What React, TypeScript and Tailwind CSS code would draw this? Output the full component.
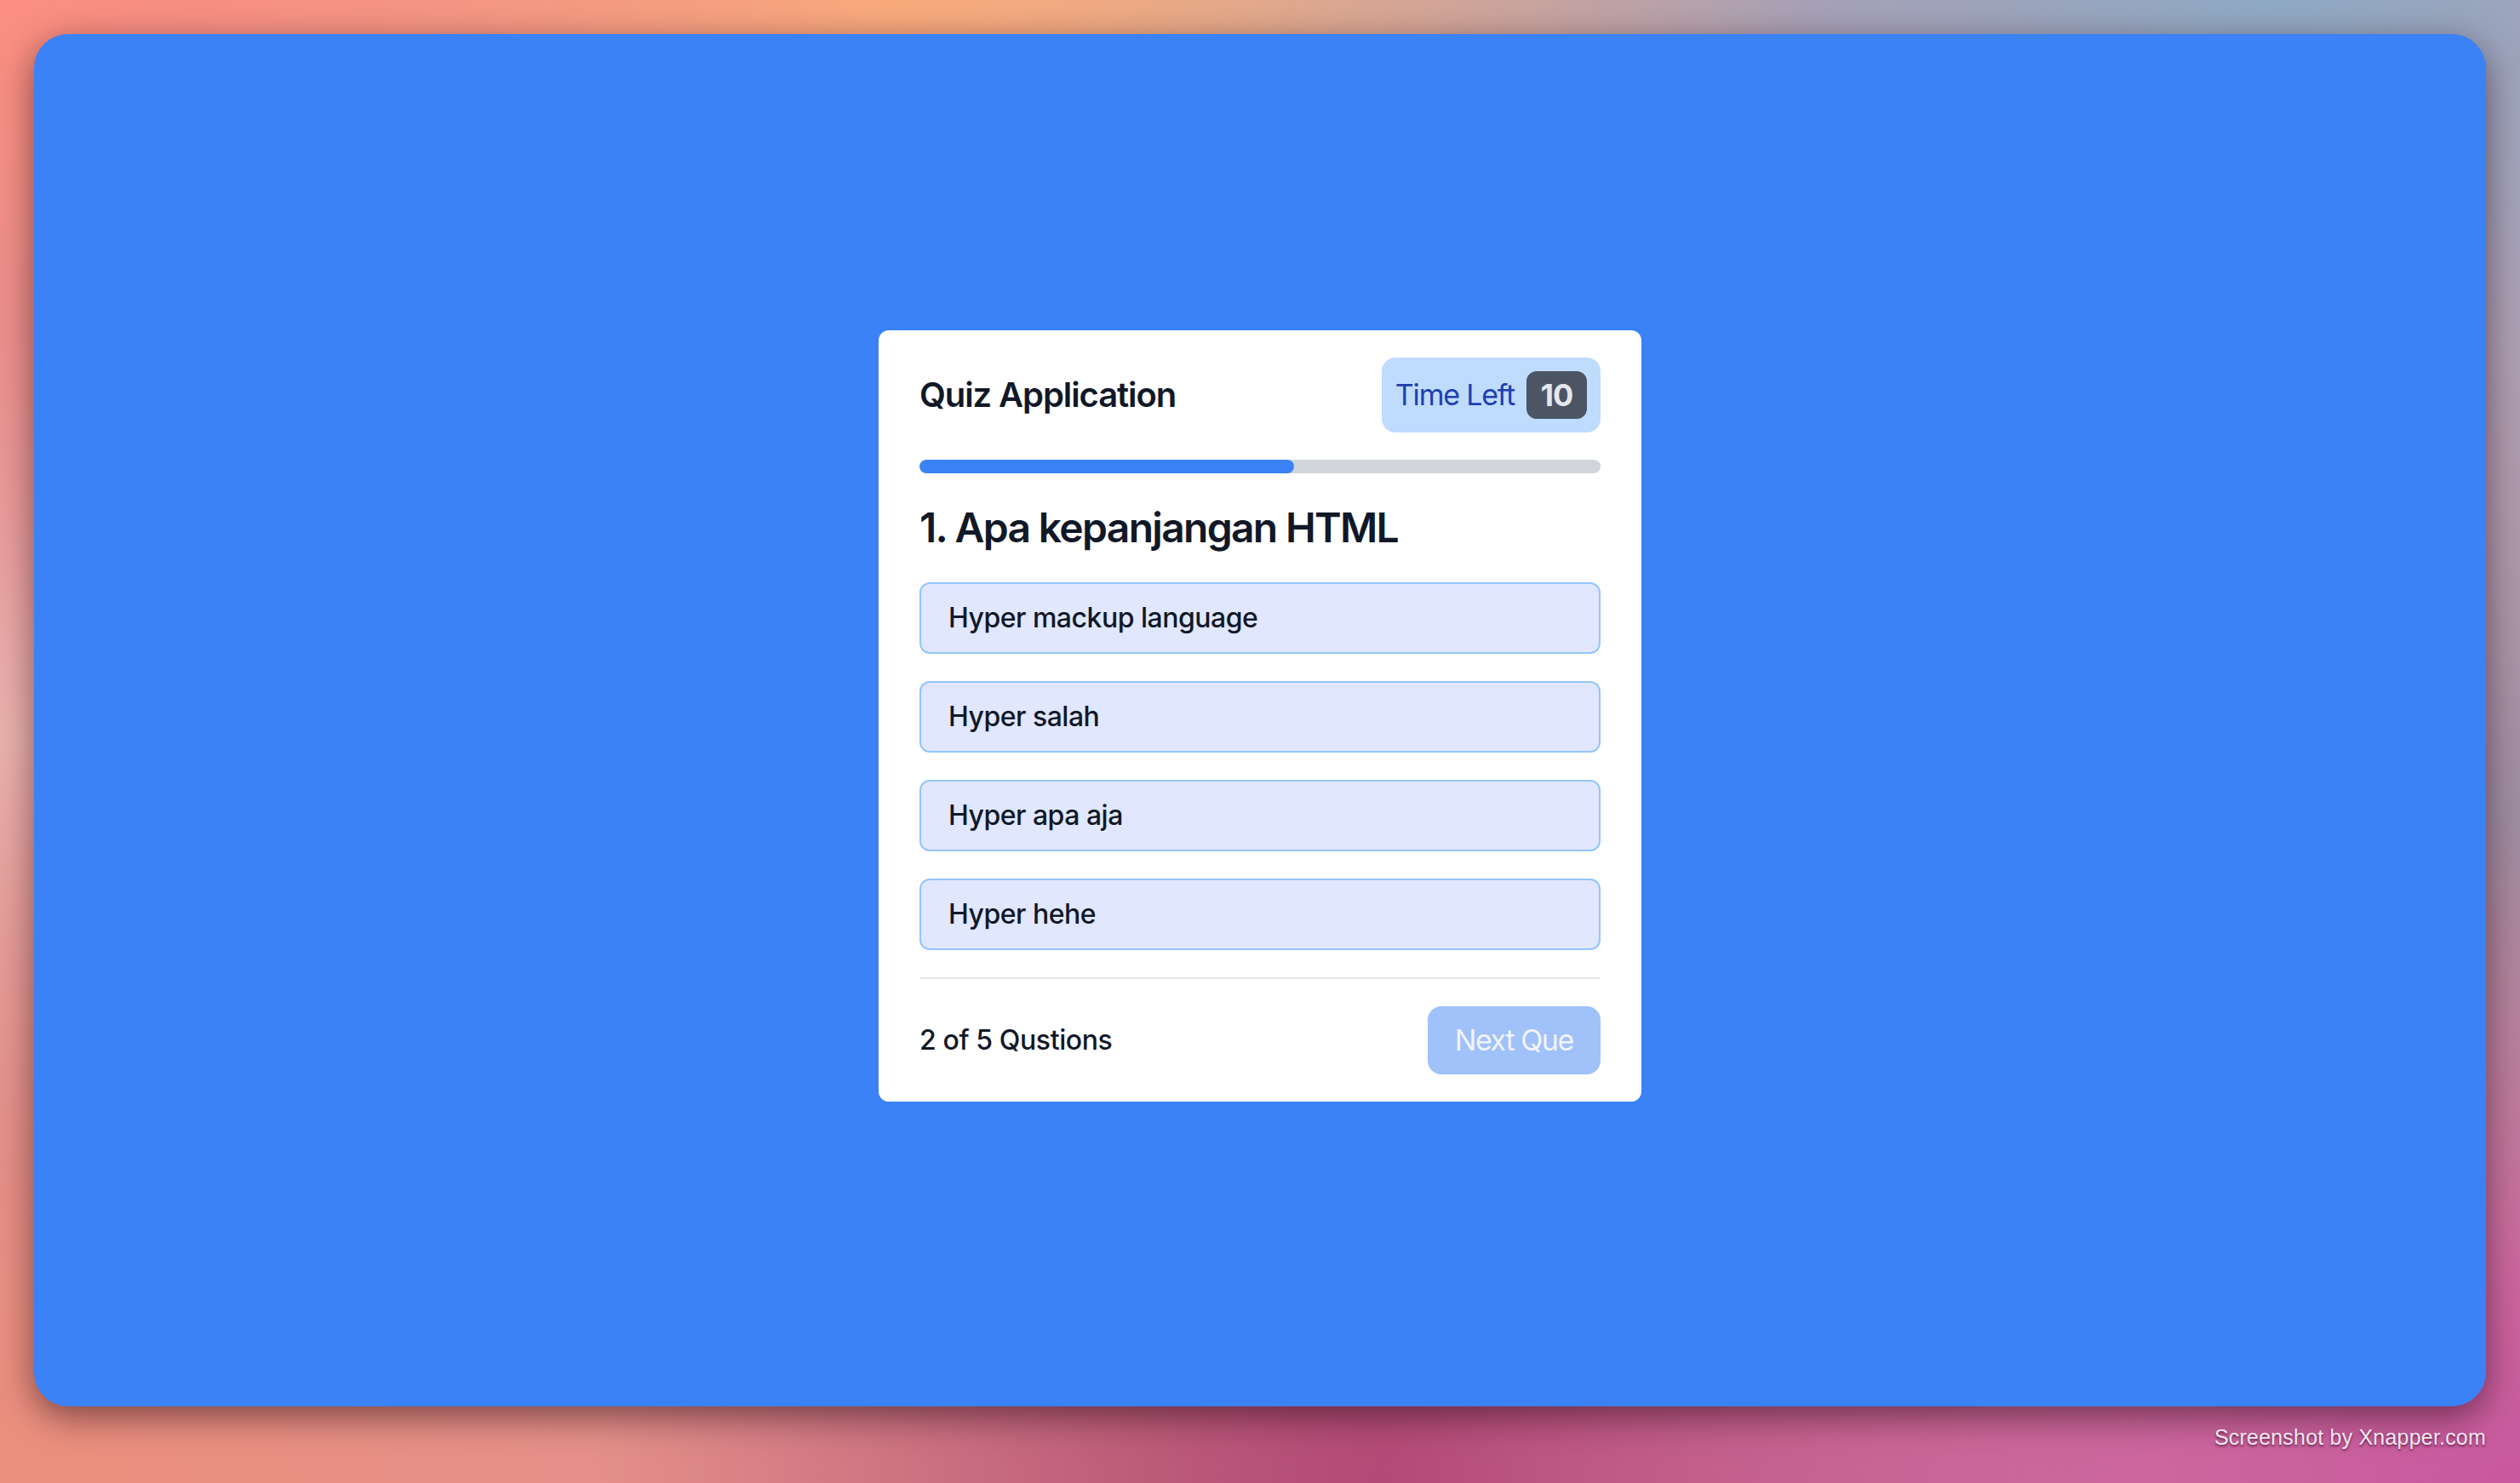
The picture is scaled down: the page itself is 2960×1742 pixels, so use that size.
import React from "react";

const options = ["Hyper mackup language", "Hyper salah", "Hyper apa aja", "Hyper hehe"];

export default function App() {
  return (
    <div
      className="w-[2960px] h-[1742px] flex flex-col px-[40px] pt-[40px] overflow-hidden bg-[#d9909a] bg-[radial-gradient(ellipse_at_0%_0%,#fb8e80_0%,transparent_35%),radial-gradient(ellipse_at_35%_0%,#f7b57a_0%,transparent_40%),radial-gradient(ellipse_at_90%_0%,#8fa9c4_0%,transparent_45%),radial-gradient(ellipse_at_100%_55%,#a08a9e_0%,transparent_40%),radial-gradient(ellipse_at_100%_100%,#c8589f_0%,transparent_40%),radial-gradient(ellipse_at_55%_100%,#ae456c_0%,transparent_40%),radial-gradient(ellipse_at_0%_100%,#ec8f7c_0%,transparent_40%),radial-gradient(ellipse_at_0%_50%,#eab6b3_0%,transparent_40%)]"
      style={{ fontFamily: "Inter, 'Noto Sans', sans-serif" }}
    >
      <div className="h-[1612px] w-full shrink-0 rounded-[40px] bg-[#3b82f6] shadow-[0_12px_40px_rgba(40,10,20,0.55)] flex items-center justify-center pb-[10px]">
        <div className="w-[896px] bg-white rounded-[12px] px-[48px] py-[32px] flex flex-col">
          <div className="flex items-center justify-between">
            <h1 className="text-[40px] leading-[56px] font-semibold text-[#111827] tracking-[-1.1px]">Quiz Application</h1>
            <div className="flex items-center gap-[14px] bg-[#bfdbfe] rounded-[16px] p-[16px]">
              <span className="text-[34px] leading-[56px] text-[#1e40af] tracking-[-1.2px]">Time Left</span>
              <span className="h-[56px] w-[71px] flex items-center justify-center rounded-[12px] bg-[#4b5563] text-[#e5e7eb] text-[36px] leading-[56px] font-bold tracking-[-1px]">10</span>
            </div>
          </div>
          <div className="mt-[32px] h-[16px] w-full rounded-full bg-[#d1d5db] overflow-hidden">
            <div className="h-full rounded-full bg-[#3b82f6]" style={{ width: "55%" }} />
          </div>
          <h2 className="mt-[32px] text-[48px] leading-[64px] font-semibold text-[#111827] tracking-[-1.7px]">1. Apa kepanjangan HTML</h2>
          <div className="mt-[32px] flex flex-col gap-[32px]">
            {options.map((o) => (
              <div
                key={o}
                className="border-2 border-[#93c5fd] bg-[#e0e7ff] rounded-[12px] px-[32px] py-[16px] text-[32px] leading-[48px] font-medium text-[#111827] tracking-[-0.5px]"
              >
                {o}
              </div>
            ))}
          </div>
          <div className="mt-[32px] h-[2px] bg-[#e5e7eb]" />
          <div className="pt-[32px] flex items-center justify-between">
            <span className="text-[32px] leading-[48px] font-medium text-[#111827] tracking-[-0.4px]">2 of 5 Qustions</span>
            <button className="h-[80px] px-[32px] rounded-[16px] bg-[#a0c1fa] text-[#f1f3f7] text-[34px] leading-[56px] tracking-[-1.4px]">Next Que</button>
          </div>
        </div>
      </div>
      <div className="mt-[20px] text-right text-[25px] leading-[32px] text-[#f3e6f0] font-medium tracking-[0.2px] [text-shadow:0_2px_3px_rgba(60,10,40,0.7)]" style={{ fontFamily: "'Liberation Sans', Inter, sans-serif" }}>
        Screenshot by Xnapper.com
      </div>
    </div>
  );
}
